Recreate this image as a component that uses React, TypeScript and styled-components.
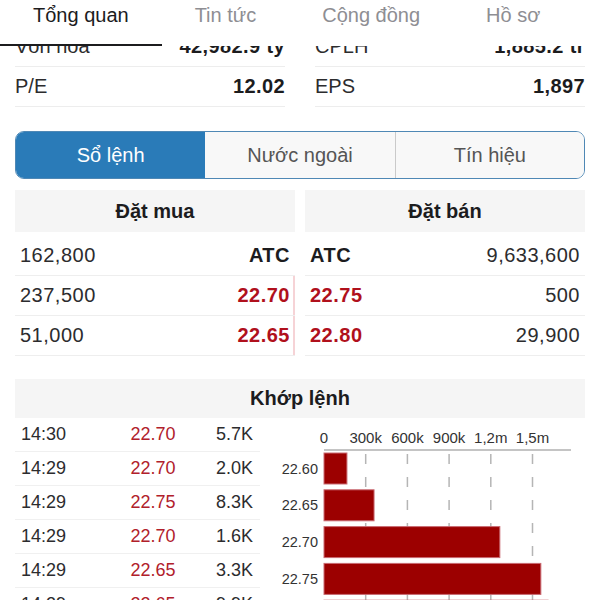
import React, { useLayoutEffect, useRef, useState } from 'react'
import styled, { createGlobalStyle } from 'styled-components'

const GlobalStyle = createGlobalStyle`
  html, body {
    margin: 0;
    padding: 0;
    background: #fff;
    font-family: "Liberation Sans", Arial, sans-serif;
    color: #1c1c1e;
  }
  #root { height: 600px; }
  * { box-sizing: border-box; }
`

const Screen = styled.div`
  width: 600px;
  height: 600px;
  display: flex;
  flex-direction: column;
  overflow: hidden;
`

const TabBar = styled.div`
  height: 46px;
  flex-shrink: 0;
  display: flex;
  background: #fff;
`

const Tab = styled.div<{ $active: boolean }>`
  padding: 3px 33px 0;
  font-size: 20px;
  line-height: 24px;
  color: ${(p) => (p.$active ? '#1c1c1e' : '#8e8e93')};
  border-bottom: 2px solid ${(p) => (p.$active ? '#1c1c1e' : 'transparent')};
  cursor: pointer;
`

const Body = styled.div`
  flex: 1;
  overflow: hidden;
`

const Content = styled.div`
  padding: 0 15px;
`

const StatsGrid = styled.div`
  display: grid;
  grid-template-columns: 1fr 1fr;
  column-gap: 30px;
`

const StatRow = styled.div`
  height: 40px;
  display: flex;
  align-items: center;
  justify-content: space-between;
  border-bottom: 1px solid #ededed;
  font-size: 20px;
  color: #2c2c2e;
`

const StatValue = styled.span`
  font-weight: 700;
  letter-spacing: 0.4px;
  color: #1c1c1e;
`

const Segmented = styled.div`
  margin-top: 24px;
  height: 48px;
  display: grid;
  grid-template-columns: repeat(3, 1fr);
  border: 1.5px solid #4f88b5;
  border-radius: 9px;
  overflow: hidden;
`

const Segment = styled.div<{ $active: boolean; $divider: boolean }>`
  display: flex;
  align-items: center;
  justify-content: center;
  font-size: 20px;
  background: ${(p) => (p.$active ? '#2a7bb8' : '#f8f8f8')};
  color: ${(p) => (p.$active ? '#fff' : '#555')};
  border-left: ${(p) => (p.$divider ? '1px solid #cacaca' : 'none')};
  cursor: pointer;
`

const BookHead = styled.div`
  margin-top: 11px;
  display: grid;
  grid-template-columns: 1fr 1fr;
  column-gap: 10px;
`

const HeadCell = styled.div`
  height: 42px;
  display: flex;
  align-items: center;
  justify-content: center;
  background: #f5f5f5;
  font-size: 20px;
  font-weight: 700;
  color: #1c1c1e;
`

const BookRows = styled.div`
  margin-top: 4px;
  display: grid;
  grid-template-columns: 1fr 1fr;
  column-gap: 10px;
`

const BookHalf = styled.div<{ $mark?: boolean }>`
  height: 40px;
  display: flex;
  align-items: center;
  justify-content: space-between;
  padding: 0 5px;
  border-bottom: 1px solid #eeeeee;
  font-size: 20px;
  letter-spacing: 0.5px;
  color: #2c2c2e;
  box-shadow: ${(p) => (p.$mark ? 'inset -2px 0 0 #f6d3d6' : 'none')};
`

const Price = styled.span<{ $red: boolean }>`
  font-weight: 700;
  color: ${(p) => (p.$red ? '#b0101c' : '#1c1c1e')};
`

const TradesHead = styled.div`
  margin-top: 23px;
  height: 39px;
  display: flex;
  align-items: center;
  justify-content: center;
  background: #f5f5f5;
  font-size: 20px;
  font-weight: 700;
`

const TradesSection = styled.div`
  display: flex;
  align-items: flex-start;
`

const TradeList = styled.div`
  width: 245px;
  flex-shrink: 0;
`

const TradeRow = styled.div`
  height: 34px;
  display: grid;
  grid-template-columns: 100px 76px 1fr;
  align-items: center;
  border-bottom: 1px solid #f0f0f0;
  font-size: 18px;
  color: #2c2c2e;
`

const Time = styled.span`
  padding-left: 6px;
`

const TradePrice = styled.span`
  text-align: center;
  color: #b1202b;
`

const TradeVol = styled.span`
  text-align: right;
  padding-right: 7px;
`

const Chart = styled.svg`
  display: block;
  flex-shrink: 0;
  font-family: "Liberation Sans", Arial, sans-serif;
`

const tabs = ['Tổng quan', 'Tin tức', 'Cộng đồng', 'Hồ sơ']
const segments = ['Sổ lệnh', 'Nước ngoài', 'Tín hiệu']

const stats = [
  [
    { label: 'Vốn hóa', value: '42,982.9 tỷ' },
    { label: 'CPLH', value: '1,885.2 tr' },
  ],
  [
    { label: 'P/E', value: '12.02' },
    { label: 'EPS', value: '1,897' },
  ],
]

const book = [
  { buyVol: '162,800', buy: 'ATC', sell: 'ATC', sellVol: '9,633,600' },
  { buyVol: '237,500', buy: '22.70', sell: '22.75', sellVol: '500' },
  { buyVol: '51,000', buy: '22.65', sell: '22.80', sellVol: '29,900' },
]

const trades = [
  { time: '14:30', price: '22.70', vol: '5.7K' },
  { time: '14:29', price: '22.70', vol: '2.0K' },
  { time: '14:29', price: '22.75', vol: '8.3K' },
  { time: '14:29', price: '22.70', vol: '1.6K' },
  { time: '14:29', price: '22.65', vol: '3.3K' },
  { time: '14:29', price: '22.65', vol: '9.9K' },
]

const volumeByPrice = [
  { price: '22.60', vol: 165000 },
  { price: '22.65', vol: 360000 },
  { price: '22.70', vol: 1265000 },
  { price: '22.75', vol: 1560000 },
  { price: '22.80', vol: 1612000 },
]

const axisTicks = ['0', '300k', '600k', '900k', '1,2m', '1,5m']

function VolumeChart() {
  const x0 = 64
  const step = 41.7
  const scale = step / 300000
  const barTop = 35
  const pitch = 36.8
  const barH = 31

  return (
    <Chart width={325} height={200} viewBox="0 0 325 200">
      {axisTicks.map((t, i) => (
        <text key={t} x={x0 + i * step} y={25} fontSize={15} fill="#333" textAnchor="middle">
          {t}
        </text>
      ))}
      <line x1={x0} y1={32} x2={311} y2={32} stroke="#c4c4c4" strokeWidth={2} />
      {axisTicks.slice(1).map((t, i) => (
        <line
          key={t}
          x1={x0 + (i + 1) * step}
          y1={36}
          x2={x0 + (i + 1) * step}
          y2={200}
          stroke="#b5b5b5"
          strokeWidth={1.5}
          strokeDasharray="10 13"
        />
      ))}
      {volumeByPrice.map((b, i) => {
        const y = barTop + i * pitch
        return (
          <g key={b.price}>
            <rect x={x0} y={y} width={b.vol * scale} height={barH} fill="#9c0000" stroke="#c96a72" strokeWidth={1} />
            <text x={58} y={y + barH / 2 + 5} fontSize={14.5} fill="#333" textAnchor="end">
              {b.price}
            </text>
          </g>
        )
      })}
    </Chart>
  )
}

export default function App() {
  const [activeTab, setActiveTab] = useState(0)
  const [activeSeg, setActiveSeg] = useState(0)
  const bodyRef = useRef<HTMLDivElement>(null)

  // màn hình đang cuộn xuống một chút
  useLayoutEffect(() => {
    if (bodyRef.current) bodyRef.current.scrollTop = 19
  }, [])

  return (
    <>
      <GlobalStyle />
      <Screen>
        <TabBar>
          {tabs.map((t, i) => (
            <Tab key={t} $active={activeTab === i} onClick={() => setActiveTab(i)}>
              {t}
            </Tab>
          ))}
        </TabBar>
        <Body ref={bodyRef}>
          <Content>
            <StatsGrid>
              {stats.map((row) =>
                row.map((s) => (
                  <StatRow key={s.label}>
                    <span>{s.label}</span>
                    <StatValue>{s.value}</StatValue>
                  </StatRow>
                ))
              )}
            </StatsGrid>

            <Segmented>
              {segments.map((s, i) => (
                <Segment
                  key={s}
                  $active={activeSeg === i}
                  $divider={i > 0 && activeSeg !== i - 1 && activeSeg !== i}
                  onClick={() => setActiveSeg(i)}
                >
                  {s}
                </Segment>
              ))}
            </Segmented>

            <BookHead>
              <HeadCell>Đặt mua</HeadCell>
              <HeadCell>Đặt bán</HeadCell>
            </BookHead>
            <BookRows>
              {book.map((r) => (
                <React.Fragment key={r.buyVol}>
                  <BookHalf $mark={r.buy !== 'ATC'}>
                    <span>{r.buyVol}</span>
                    <Price $red={r.buy !== 'ATC'}>{r.buy}</Price>
                  </BookHalf>
                  <BookHalf>
                    <Price $red={r.sell !== 'ATC'}>{r.sell}</Price>
                    <span>{r.sellVol}</span>
                  </BookHalf>
                </React.Fragment>
              ))}
            </BookRows>

            <TradesHead>Khớp lệnh</TradesHead>
            <TradesSection>
              <TradeList>
                {trades.map((t, i) => (
                  <TradeRow key={i}>
                    <Time>{t.time}</Time>
                    <TradePrice>{t.price}</TradePrice>
                    <TradeVol>{t.vol}</TradeVol>
                  </TradeRow>
                ))}
              </TradeList>
              <VolumeChart />
            </TradesSection>
          </Content>
        </Body>
      </Screen>
    </>
  )
}
